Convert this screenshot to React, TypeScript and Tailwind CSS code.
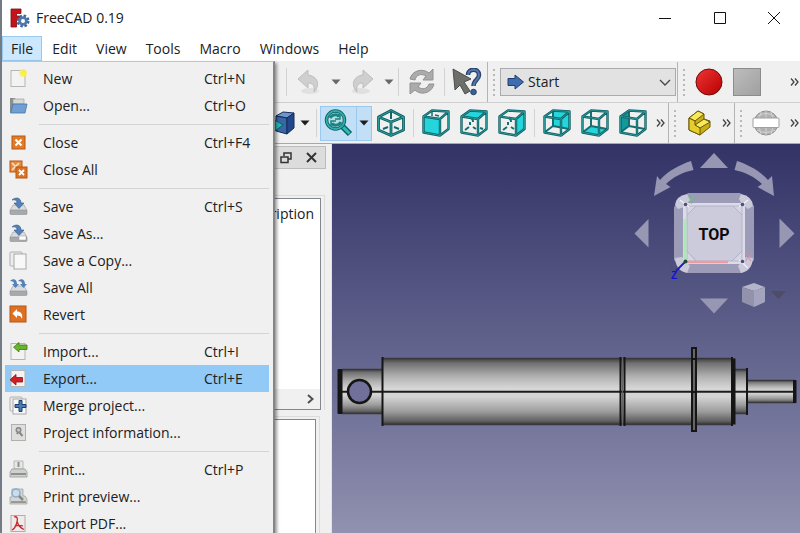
import type { ReactNode } from "react";
import clsx from "clsx";

type Face = "front" | "top" | "right" | "rear" | "bottom" | "left";

const FACES: Record<Face, string> = {
  front: "1,7 18,10 18,27 1,24",
  top: "1,7 10,1 27,2 18,10",
  right: "18,10 27,2 27,20 18,27",
  rear: "10,1 27,2 27,20 10,17",
  bottom: "1,24 10,17 27,20 18,27",
  left: "1,7 10,1 10,17 1,24",
};

function CubeIcon({ face }: { face: Face }) {
  const behind = face === "rear" || face === "bottom" || face === "left";
  const hidden = "M10 2V17L2 23M10 17L26 20";
  const outline = "M1.500 7.500L18 10V26.500L1.500 23.500ZM1.500 7.500L10 1.500L26.500 2.500L18 10M26.500 2.500V20L18 26.500";
  return (
    <svg width="28" height="28" viewBox="0 0 28 28" fill="none" strokeLinejoin="round">
      {behind && <polygon points={FACES[face]} fill={face === "left" ? "#12999c" : "#25d5dc"} />}
      {behind && <path d={hidden} stroke="#176f70" strokeWidth="2" />}
      {!behind && face !== "front" && (
        <path d="M5 21l4-3M13 18l3 2M10 13v3M20 19l3 1M10 9q3 0 3 4" stroke="#136f70" strokeWidth="2" />
      )}
      {face === "front" && <path d="M10 2v5M13 6l4 1" stroke="#136f70" strokeWidth="1.500" />}
      {!behind && <polygon points={FACES[face]} fill="#25d5dc" />}
      <path d={outline} stroke="#0f5f62" strokeWidth="2.400" />
      <path d={outline} stroke="#2fa6a6" strokeWidth=".8" />
    </svg>
  );
}

function IsoIcon() {
  const d = "M14 1.500L26.500 8V21L14 26.500L1.500 21V8ZM1.500 8L14 13L26.500 8M14 13V26.500";
  return (
    <svg width="28" height="28" viewBox="0 0 28 28" fill="none" strokeLinejoin="round">
      <path d="M14 2V10M6 20l5-2M17 18l5 2" stroke="#12686a" strokeWidth="2" />
      <path d={d} stroke="#0f5f62" strokeWidth="2.800" />
      <path d={d} stroke="#2fa6a6" strokeWidth=".9" />
    </svg>
  );
}

function AppLogo() {
  return (
    <svg width="20" height="20" viewBox="0 0 20 20">
      <path d="M1 1H11V5.500H6.500V8H9.500V12H6.500V19H1Z" fill="#c3141c" stroke="#7d0a10" strokeWidth=".8" />
      <circle cx="13" cy="13" r="5.200" fill="none" stroke="#3d6497" strokeWidth="2.600" strokeDasharray="2.400 1.680" />
      <circle cx="13" cy="13" r="3.400" fill="none" stroke="#4e78ae" strokeWidth="2.800" />
    </svg>
  );
}

function PageShape() {
  return <rect x="2" y="1.500" width="14" height="16" fill="#f3f3f3" stroke="#b5b5b2" />;
}

function Drive() {
  return (
    <>
      <path d="M4 8H15L18 13.500H1Z" fill="#d9dbdc" stroke="#a9abad" strokeWidth=".8" />
      <rect x="1" y="13" width="17" height="4.500" rx="1" fill="#a7aaac" stroke="#8e9193" strokeWidth=".6" />
    </>
  );
}

const MENU_ICONS: Record<string, ReactNode> = {
  new: (
    <>
      <PageShape />
      <circle cx="14" cy="4" r="4" fill="#f6ef65" opacity=".8" />
      <circle cx="14" cy="4" r="2" fill="#fff21f" />
    </>
  ),
  open: (
    <>
      <path d="M1 2H6L7 4H15V16H1Z" fill="#8b8e8c" />
      <path d="M4 3H15V8H4Z" fill="#d5d8d6" stroke="#999" strokeWidth=".6" />
      <path d="M4 8H18L16 17H1.500Z" fill="#6f9fd3" stroke="#4474aa" strokeWidth=".8" />
    </>
  ),
  close: (
    <>
      <rect x="3" y="3" width="13" height="13" fill="#e07b2a" stroke="#b8560f" />
      <path d="M6.500 6.500L12.500 12.500M12.500 6.500L6.500 12.500" stroke="#fff" strokeWidth="2" />
    </>
  ),
  closeAll: (
    <>
      <rect x="1" y="1" width="12" height="11" fill="#e58b42" stroke="#b8560f" />
      <path d="M3 3L10 10M10 3L3 10" stroke="#ffe2c8" strokeWidth="1.500" />
      <rect x="7" y="7" width="11" height="11" fill="#dc7224" stroke="#b8560f" />
      <path d="M10 10L15 15M15 10L10 15" stroke="#fff" strokeWidth="1.800" />
    </>
  ),
  save: (
    <>
      <Drive />
      <path d="M3 3C6 0 12 0 12 6H15L10 11.500L5 6H8C8 3 6 2.500 3 3Z" fill="#5381b8" stroke="#31588a" strokeWidth=".6" />
    </>
  ),
  saveAs: (
    <>
      <Drive />
      <path d="M3 3C6 0 12 0 12 6H15L10 11.500L5 6H8C8 3 6 2.500 3 3Z" fill="#5381b8" stroke="#31588a" strokeWidth=".6" />
      <rect x="10" y="12" width="7" height="4" fill="#fff" stroke="#999" strokeWidth=".5" />
    </>
  ),
  copy: (
    <>
      <rect x="1" y="1" width="12" height="14" rx="1" fill="#ededed" stroke="#b0b0b0" />
      <rect x="5" y="3" width="12" height="15" fill="#f8f8f8" stroke="#a8a8a8" />
    </>
  ),
  saveAll: (
    <>
      <Drive />
      <path d="M1 3C4 0 8 1 8 6H10L6.500 10L3 6H5C5 4 4 3 1 3Z" fill="#5381b8" />
      <path d="M9 3C12 0 16 1 16 6H18L14.500 10L11 6H13C13 4 12 3 9 3Z" fill="#5381b8" />
    </>
  ),
  revert: (
    <>
      <rect x="1" y="1" width="16" height="16" fill="#de7022" stroke="#b35615" />
      <path d="M8 4V6.500C12 6.500 14 9 13 14C12 11.500 11 10.500 8 10.500V13L3.500 8.500Z" fill="#fff" />
    </>
  ),
  import: (
    <>
      <PageShape />
      <path d="M10 0.500V3H18V7.500H10V10L4.500 5.200Z" fill="#67b52c" stroke="#3d7a14" strokeWidth=".8" />
    </>
  ),
  export: (
    <>
      <PageShape />
      <path d="M7 5.500V8.500H13.500V13H7V16L1 10.800Z" fill="#d21f25" stroke="#930c12" strokeWidth=".8" />
    </>
  ),
  merge: (
    <>
      <rect x="1" y="1" width="12" height="14" rx="1" fill="#ededed" stroke="#b0b0b0" />
      <rect x="4" y="3" width="13" height="15" fill="#f8f8f8" stroke="#a8a8a8" />
      <path d="M10 4.500H13V8.500H17V11.500H13V15.500H10V11.500H6V8.500H10Z" fill="#4b7db5" stroke="#1d3f6b" />
    </>
  ),
  info: (
    <>
      <rect x="2.500" y="1.500" width="14" height="16" fill="#dedfdd" stroke="#b0b0ae" />
      <circle cx="9.500" cy="7" r="2.300" fill="#c2c6c6" stroke="#858886" strokeWidth="1.400" />
      <path d="M8 11L9 9.500M10.500 9.500L13.500 13" stroke="#858886" strokeWidth="2" />
    </>
  ),
  print: (
    <>
      <path d="M5 1H14V9H5Z" fill="#e6e8e6" stroke="#a9aba9" strokeWidth=".8" />
      <path d="M9.500 2V7" stroke="#8e908e" strokeWidth="2" />
      <path d="M3 9H16L18 12V17H1V12Z" fill="#cfd1cf" stroke="#999b99" strokeWidth=".8" />
      <rect x="2" y="13" width="15" height="2" fill="#8f918f" />
    </>
  ),
  preview: (
    <>
      <path d="M3 2H14V9H16L18 12V17H1V10H3Z" fill="#d3d5d3" stroke="#a2a4a2" strokeWidth=".8" />
      <rect x="2" y="14" width="15" height="2" fill="#979997" />
      <circle cx="7" cy="6" r="4" fill="#c9dcec" stroke="#8cabc6" strokeWidth="1.500" />
      <path d="M10 9L14 13" stroke="#868886" strokeWidth="2.500" />
    </>
  ),
  pdf: (
    <>
      <rect x="2" y="1.500" width="14" height="16" fill="#eeeceb" stroke="#b8a8a6" />
      <path
        d="M5 3C8 2 9 4 8 8C7 12 5 15 3 16M8 7C9 11 11 14 15 15.500M5.500 12.500C8 11 11 11 14 12"
        fill="none"
        stroke="#cc2429"
        strokeWidth="1.300"
      />
    </>
  ),
};

interface MenuEntry {
  icon: string;
  label: string;
  keys?: string;
}

const FILE_MENU: MenuEntry[][] = [
  [
    { icon: "new", label: "New", keys: "Ctrl+N" },
    { icon: "open", label: "Open...", keys: "Ctrl+O" },
  ],
  [
    { icon: "close", label: "Close", keys: "Ctrl+F4" },
    { icon: "closeAll", label: "Close All" },
  ],
  [
    { icon: "save", label: "Save", keys: "Ctrl+S" },
    { icon: "saveAs", label: "Save As..." },
    { icon: "copy", label: "Save a Copy..." },
    { icon: "saveAll", label: "Save All" },
    { icon: "revert", label: "Revert" },
  ],
  [
    { icon: "import", label: "Import...", keys: "Ctrl+I" },
    { icon: "export", label: "Export...", keys: "Ctrl+E" },
    { icon: "merge", label: "Merge project..." },
    { icon: "info", label: "Project information..." },
  ],
  [
    { icon: "print", label: "Print...", keys: "Ctrl+P" },
    { icon: "preview", label: "Print preview..." },
    { icon: "pdf", label: "Export PDF..." },
  ],
];

function FileMenu() {
  return (
    <div className="absolute top-full left-0 z-10 w-[273px] border-t border-r-2 border-t-[#c4c4c4] border-r-[#858585] bg-[#f0f0f0] py-[3px] pr-[4px] pl-[3px] shadow-[2px_2px_3px_rgba(0,0,0,0.4)]">
      {FILE_MENU.map((group, i) => (
        <div key={i}>
          {i > 0 && (
            <div className="flex h-[10px] items-center pl-[34px]">
              <div className="h-px w-full bg-[#d4d4d4]" />
            </div>
          )}
          {group.map((item) => (
            <button
              key={item.label}
              className={clsx(
                "flex h-[27px] w-full items-center text-left whitespace-nowrap",
                item.icon === "export" && "bg-[#91c9f7]"
              )}
            >
              <svg width="19" height="19" viewBox="0 0 19 19" className="ml-[4px] shrink-0">
                {MENU_ICONS[item.icon]}
              </svg>
              <span className="ml-[15px] w-[161px]">{item.label}</span>
              <span>{item.keys}</span>
            </button>
          ))}
        </div>
      ))}
    </div>
  );
}

function Tool({ label, className, children }: { label: string; className: string; children: ReactNode }) {
  return (
    <button aria-label={label} className={clsx("flex shrink-0 items-center justify-center", className)}>
      {children}
    </button>
  );
}

function Caret({ label, color = "#1d1d1d", className = "w-[15px]" }: { label: string; color?: string; className?: string }) {
  return (
    <Tool label={label} className={clsx("h-8", className)}>
      <svg width="10" height="6" viewBox="0 0 10 6">
        <path d="M0.500 0.500H9.500L5 5.500Z" fill={color} />
      </svg>
    </Tool>
  );
}

function Sep({ className = "mx-[3px]" }: { className?: string }) {
  return <div className={clsx("h-7 w-px shrink-0 bg-[#d2d2d2]", className)} />;
}

function Grip() {
  return (
    <div className="flex w-3 shrink-0 flex-col items-center gap-[3px]">
      {[1, 2, 3, 4, 5, 6].map((i) => (
        <div key={i} className="size-[2px] bg-[#b9b9b9]" />
      ))}
    </div>
  );
}

function More({ className }: { className?: string }) {
  return (
    <Tool label="More tools" className={clsx("h-8", className)}>
      <svg width="9" height="8" viewBox="0 0 9 8" fill="none" stroke="#444" strokeWidth="1.300">
        <path d="M1 .5L4 4L1 7.500M5 .5L8 4L5 7.500" />
      </svg>
    </Tool>
  );
}

function FileToolbar() {
  return (
    <div className="flex h-[41px] items-stretch border-b border-[#cfcfcf]">
      <div className="flex items-center border-r border-[#b4b4b4] pl-[284px]">
        <Sep className="mr-[3px]" />
        <Tool label="Undo" className="h-8 w-[38px]">
          <svg width="24" height="26" viewBox="0 0 24 26">
            <ellipse cx="13" cy="22" rx="9" ry="3" fill="#e0e0e0" />
            <path d="M11 1V6C20 7 24 15 17 23C18 17 16 14 11 14V19L1 10Z" fill="#cfcfcf" stroke="#bdbdbd" />
          </svg>
        </Tool>
        <Caret label="Undo list" color="#686868" />
        <Tool label="Redo" className="h-8 w-[38px]">
          <svg width="24" height="26" viewBox="0 0 24 26">
            <ellipse cx="11" cy="22" rx="9" ry="3" fill="#e0e0e0" />
            <path d="M13 1V6C4 7 0 15 7 23C6 17 8 14 13 14V19L23 10Z" fill="#cfcfcf" stroke="#bdbdbd" />
          </svg>
        </Tool>
        <Caret label="Redo list" color="#686868" />
        <Sep className="mx-[2px]" />
        <Tool label="Refresh" className="h-8 w-[42px]">
          <svg width="26" height="28" viewBox="0 0 26 28" fill="#ababab" stroke="#929292">
            <path d="M1 11C3 2 14 0 20 5L24 1V12H14L17 8C12 5 7 7 6 12Z" />
            <path d="M25 16C23 25 12 28 6 22L1 26V15H12L9 19C14 22 18 21 20 16Z" />
          </svg>
        </Tool>
        <Sep className="mx-px" />
        <Tool label="What's this" className="h-8 w-[41px]">
          <svg width="30" height="28" viewBox="0 0 30 28">
            <path d="M1 1L19 11L12 14L18 23L13 26L8 17L3 22Z" fill="#6d6f6a" stroke="#4c4e4a" />
            <path d="M16 7C16 0 27 0 27 7C27 12 21.500 12 21.500 18" fill="none" stroke="#29426b" strokeWidth="4.500" />
            <path d="M16 7C16 0 27 0 27 7C27 12 21.500 12 21.500 18" fill="none" stroke="#5478ab" strokeWidth="2" />
            <circle cx="21.500" cy="24" r="2.800" fill="#3c5f93" stroke="#29426b" />
          </svg>
        </Tool>
      </div>
      <div className="flex items-center border-r border-[#b4b4b4] pr-px">
        <Grip />
        <div className="relative">
          <svg width="18" height="16" viewBox="0 0 18 16" className="pointer-events-none absolute top-[6px] left-[7px]">
            <path d="M1 4.500H8V1L16.500 8L8 15V11.500H1Z" fill="#3f6cae" stroke="#1f3f70" />
          </svg>
          <select
            aria-label="Workbench"
            className="h-[28px] w-[176px] appearance-none border border-[#ababab] bg-[#e2e2e2] pl-[27px] text-sm"
          >
            <option>Start</option>
          </select>
          <svg
            width="12"
            height="8"
            viewBox="0 0 12 8"
            fill="none"
            className="pointer-events-none absolute top-[11px] right-[5px]"
          >
            <path d="M1 1L6 6L11 1" stroke="#444" strokeWidth="1.300" />
          </svg>
        </div>
      </div>
      <div className="flex flex-1 items-center">
        <Grip />
        <Tool label="Record macro" className="h-8 w-[38px]">
          <svg width="28" height="28" viewBox="0 0 28 28">
            <defs>
              <linearGradient id="rec" x1="0" y1="0" x2="1" y2="1">
                <stop offset="0" stopColor="#ef3535" />
                <stop offset="1" stopColor="#b80000" />
              </linearGradient>
            </defs>
            <circle cx="14" cy="14" r="13" fill="url(#rec)" stroke="#6d0b0b" />
          </svg>
        </Tool>
        <Tool label="Stop macro" className="h-8 w-[38px]">
          <div className="size-[28px] border border-[#8c8c8c] bg-linear-to-br from-[#bdbdbd] to-[#a0a0a0]" />
        </Tool>
        <More className="ml-auto w-3" />
      </div>
    </div>
  );
}

function ViewToolbar() {
  return (
    <div className="flex h-[40px] items-stretch">
      <div className="flex items-center border-r border-[#b4b4b4] pl-[269px]">
        <Tool label="Draw style" className="h-8 w-[26px]">
          <svg width="26" height="26" viewBox="0 0 26 26" stroke="#132c57" strokeLinejoin="round">
            <path d="M5 6L12 2L23 3L16 8Z" fill="#6d96cf" />
            <path d="M5 6L16 8V24L5 21Z" fill="#3a66a8" />
            <path d="M16 8L23 3V18L16 24Z" fill="#23488a" />
            <path d="M4 10L12 15L4 21Z" fill="#25b9b5" stroke="#0f5f62" />
          </svg>
        </Tool>
        <Caret label="Draw style list" className="w-[16px]" />
        <Sep />
        <div className="flex h-[35px] border border-[#99c9ef] bg-[#c2dff5]">
          <Tool label="Zoom to selection" className="w-[36px] border-r border-[#99c9ef]">
            <svg width="29" height="28" viewBox="0 0 29 28" fill="none">
              <path d="M18 17L26 25" stroke="#0f5f62" strokeWidth="6" />
              <path d="M18 17L25.500 24.500" stroke="#2bc0bf" strokeWidth="3" />
              <circle cx="11.500" cy="11" r="9" fill="#b5dedf" stroke="#0f5f62" strokeWidth="3.500" />
              <circle cx="11.500" cy="11" r="9" stroke="#31aeae" strokeWidth="1.800" />
              <path d="M6 9C8 5 14 5 15 8M17 13C15 17 9 17 8 14" stroke="#178487" strokeWidth="3" />
              <path d="M16 5V10H11M7 17V12H12" stroke="#178487" strokeWidth="1.500" />
            </svg>
          </Tool>
          <Caret label="Zoom list" className="w-[14px]" />
        </div>
        <Tool label="Isometric" className="h-8 w-[38px]">
          <IsoIcon />
        </Tool>
        <Sep />
        {(["front", "top", "right"] as Face[]).map((face) => (
          <Tool key={face} label={face} className="h-8 w-[38px]">
            <CubeIcon face={face} />
          </Tool>
        ))}
        <Sep />
        {(["rear", "bottom", "left"] as Face[]).map((face) => (
          <Tool key={face} label={face} className="h-8 w-[38px]">
            <CubeIcon face={face} />
          </Tool>
        ))}
        <More className="w-[16px]" />
      </div>
      <div className="flex items-center border-r border-[#b4b4b4]">
        <Grip />
        <Tool label="Create part" className="h-8 w-[37px]">
          <svg width="24" height="26" viewBox="0 0 24 26" stroke="#665808" strokeLinejoin="round">
            <path d="M1 8L10 1L16 4V9L22 11V17L12 25L1 20Z" fill="#c9ad16" />
            <path d="M1 8L10 1L16 4L7 11Z" fill="#f8e95a" />
            <path d="M7 15L16 9L22 12L12 18Z" fill="#f8e95a" />
            <path d="M1 8L7 11V15L12 18V25L1 20Z" fill="#e6cd2a" />
          </svg>
        </Tool>
        <More className="w-[16px]" />
      </div>
      <div className="flex flex-1 items-center">
        <Grip />
        <Tool label="Web page" className="h-8 w-[38px]">
          <svg width="28" height="28" viewBox="0 0 28 28">
            <circle cx="14" cy="14" r="12" fill="#b0b0b0" stroke="#8f8f8f" />
            <path d="M6 7Q14 2 22 7M5 21Q14 26 23 21M14 2V26M9 3Q5 14 9 25M19 3Q23 14 19 25" fill="none" stroke="#d2d2d2" />
            <rect x="1" y="9" width="26" height="9.500" rx="1" fill="#fff" stroke="#a0a0a0" />
          </svg>
        </Tool>
        <More className="ml-auto w-3" />
      </div>
    </div>
  );
}

function SidePanel() {
  return (
    <aside className="flex w-[330px] shrink-0 flex-col border-r border-[#e2e2e2] pt-[2px] pr-[5px]">
      <div className="flex h-[23px] shrink-0 items-center justify-end gap-[14px] border border-[#bcbcbc] bg-[#dcdcdc] pr-[8px]">
        <button aria-label="Float panel">
          <svg width="12" height="12" viewBox="0 0 12 12" fill="none" stroke="#333">
            <path d="M4 4V1H11V7H8" strokeWidth="1.500" />
            <rect x="1" y="5" width="7" height="5.500" strokeWidth="1.500" />
          </svg>
        </button>
        <button aria-label="Close panel">
          <svg width="11" height="11" viewBox="0 0 11 11" stroke="#333" strokeWidth="2">
            <path d="M1 1L10 10M10 1L1 10" />
          </svg>
        </button>
      </div>
      <div className="mt-[26px] mr-px border-t border-r border-[#dcdcdc] pt-[2px] pr-[3px]">
        <div className="flex h-[212px] flex-col border border-[#828790] bg-white">
          <div className="flex h-[30px] items-center justify-end pr-[6px]">Description</div>
          <button aria-label="Scroll right" className="mt-auto flex h-[20px] items-center justify-end bg-[#f0f0f0] pr-[6px]">
            <svg width="7" height="10" viewBox="0 0 7 10" fill="none" stroke="#505050" strokeWidth="2">
              <path d="M1 1L5.500 5L1 9" />
            </svg>
          </button>
        </div>
      </div>
      <div className="mt-[6px] mr-[6px] flex flex-1 border-t border-r border-[#dcdcdc] pt-[2px] pr-[3px]">
        <div className="flex-1 border border-b-0 border-[#828790] bg-white" />
      </div>
    </aside>
  );
}

function Shaft() {
  return (
    <svg viewBox="332 144 468 389" className="absolute inset-0 h-full w-full">
      <defs>
        <linearGradient id="steel" x1="0" y1="0" x2="0" y2="1">
          <stop offset="0" stopColor="#3a3a3a" />
          <stop offset="0.08" stopColor="#727272" />
          <stop offset="0.28" stopColor="#b2b2b2" />
          <stop offset="0.45" stopColor="#d6d6d6" />
          <stop offset="0.58" stopColor="#d4d4d4" />
          <stop offset="0.8" stopColor="#9c9c9c" />
          <stop offset="0.94" stopColor="#616161" />
          <stop offset="1" stopColor="#303030" />
        </linearGradient>
      </defs>
      <rect x="338" y="369" width="45" height="45" fill="url(#steel)" />
      <rect x="382" y="358" width="350" height="67" fill="url(#steel)" />
      <rect x="735" y="369" width="12" height="45" fill="url(#steel)" />
      <rect x="747" y="380" width="47" height="23" fill="url(#steel)" />
      <path d="M342 369.500H382M342 413.500H382M382 358.500H732M382 424.500H732M735 369.500H747M735 413.500H747M747 380.500H795M747 402.500H795" stroke="#38383a" strokeWidth="1.500" />
      <path d="M340 391.700H796" stroke="#1c1c1c" strokeWidth="2" />
      <rect x="337.500" y="369" width="5" height="45" rx="1" fill="#151515" />
      <circle cx="359.500" cy="391.500" r="11.500" fill="#70709a" stroke="#151515" strokeWidth="2.500" />
      <path d="M382.500 357V426M620.500 357V426M624.500 357V426M747 368V415" stroke="#151515" strokeWidth="2" />
      <path d="M622.500 358V425" stroke="#666" />
      <rect x="692" y="348" width="4" height="83" fill="#666" stroke="#151515" strokeWidth="2" />
      <path d="M691 359H697M691 392H697" stroke="#151515" strokeWidth="2" />
      <path d="M731 357H733V358.500H735.500V424.500H733V426H731Z" fill="#151515" />
      <rect x="793" y="380" width="3.500" height="23" fill="#151515" />
    </svg>
  );
}

function NavigationCube() {
  return (
    <svg width="168" height="168" viewBox="632 149 168 168" className="absolute top-[5px] right-0">
      <g fill="#9797b4">
        <path d="M714 153L728 168H700Z" />
        <path d="M700 298.500H728L714 313.500Z" />
        <path d="M634.500 233.500L648.500 219V247.500Z" />
        <path d="M794.500 233.500L779.500 218.500V248Z" />
        <path d="M691 161C679 165 668 171 660 180L657 176L654 196L670.500 187L666 184C673 177 683 172 693.500 170Z" />
        <path d="M737 161C749 165 760 171 768 180L772 176L774 196L757.500 187L762 184C755 177 745 172 734.500 170Z" />
      </g>
      <path d="M688 193H740L754 206V260L742 273H687L674 260V207Z" fill="#9c9cb9" />
      <g fill="#cacadb">
        <path d="M675 205Q676 196 687 194L690 200L684 207L678 209Z" />
        <path d="M741 194Q752 196 753 206L748 209L742 204L739 199Z" />
        <path d="M675 258L682 257L690 266L687 273Q676 271 675 258Z" />
        <path d="M753 258L746 257L738 266L741 273Q752 271 753 258Z" />
      </g>
      <path d="M683 203H745V264H683Z" fill="#dcdce8" />
      <path d="M696 206H733L742 215V251L732 261H696L687 251V215Z" fill="#cbcbdb" stroke="#b3b3c8" />
      <path d="M687 215V206H696ZM742 215V206H733ZM687 251V261H696ZM742 251V261H732Z" fill="#d5d5e3" stroke="#aaaac2" strokeWidth=".7" />
      <path d="M680 200L689 207M748 200L739 207M680 268L688 260M748 268L739 260" stroke="#f1f1f7" strokeWidth="1.200" />
      <g fill="#4e4e77">
        <circle cx="685.500" cy="204.500" r="1.800" />
        <circle cx="742.500" cy="204.500" r="1.800" />
        <circle cx="742.500" cy="261.500" r="1.800" />
      </g>
      <path d="M685 219V261" stroke="#aee7b9" strokeWidth="3" />
      <path d="M686 262H728" stroke="#ec9da3" strokeWidth="2.500" />
      <path d="M685.500 261.500L676 271" stroke="#1c1cc9" strokeWidth="2" />
      <circle cx="685.500" cy="261.500" r="2" fill="#1f4a3a" />
      <g className="font-['Liberation_Sans'] text-[10px]">
        <text x="688" y="204" fill="#61c977">Y</text>
        <text x="745" y="261" fill="#d98b9b">X</text>
        <text x="671" y="279" fill="#1111d8" fontWeight="bold">Z</text>
      </g>
      <text x="714" y="240" textAnchor="middle" className="font-[Roboto,sans-serif] text-[16px] font-bold" fill="#0a0a0a">
        TOP
      </text>
      <path d="M742 287L754 283L765 287L754 291Z" fill="#b5b5ca" />
      <path d="M742 287L754 291V307L742 302Z" fill="#9292ad" />
      <path d="M754 291L765 287V302L754 307Z" fill="#a4a4be" />
      <path d="M771 291H786L778.500 299Z" fill="#4e4c69" />
    </svg>
  );
}

export default function App() {
  return (
    <div className="flex h-screen flex-col overflow-hidden border-l-2 border-[#737b84] bg-[#f0f0f0] font-['Open_Sans','Noto_Sans',sans-serif] text-sm text-[#202020]">
      <header className="flex h-[36px] shrink-0 items-center bg-white pl-[8px]">
        <AppLogo />
        <h1 className="ml-[6px]">FreeCAD 0.19</h1>
        <div className="ml-auto flex h-full">
          <Tool label="Minimize" className="w-[55px]">
            <svg width="12" height="12" viewBox="0 0 12 12" stroke="#111"><path d="M0 6.500H12" /></svg>
          </Tool>
          <Tool label="Maximize" className="w-[55px]">
            <svg width="12" height="12" viewBox="0 0 12 12" fill="none" stroke="#111"><path d="M.5 .5H11.500V11.500H.5Z" /></svg>
          </Tool>
          <Tool label="Close window" className="w-[53px]">
            <svg width="12" height="12" viewBox="0 0 12 12" stroke="#111"><path d="M0 0L12 12M12 0L0 12" /></svg>
          </Tool>
        </div>
      </header>

      <nav className="relative flex h-[25px] shrink-0 gap-px bg-white">
        <button className="border border-[#99c9ef] bg-[#cce8ff] px-[8px]">File</button>
        {["Edit", "View", "Tools", "Macro", "Windows", "Help"].map((name) => (
          <button key={name} className="px-[9px]">{name}</button>
        ))}
        <FileMenu />
      </nav>

      <div className="shrink-0 border-b border-[#a8a8a8] pt-px">
        <FileToolbar />
        <ViewToolbar />
      </div>

      <div className="flex min-h-0 flex-1">
        <SidePanel />
        <main className="relative flex-1 overflow-hidden bg-linear-to-b from-[#333366] to-[#9191b0]">
          <Shaft />
          <NavigationCube />
        </main>
      </div>
    </div>
  );
}
